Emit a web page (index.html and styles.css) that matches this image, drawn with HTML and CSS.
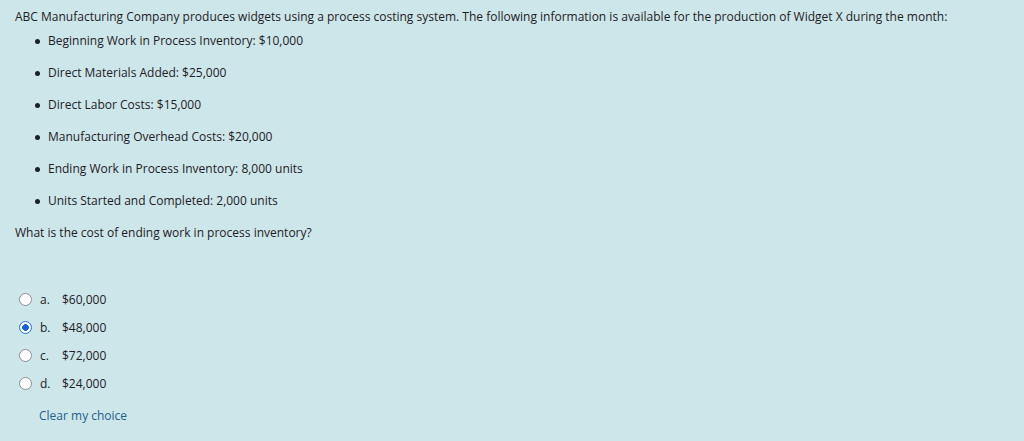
FILE: index.html
```html
<!DOCTYPE html>
<html>
<head>
<meta charset="utf-8">
<link rel="stylesheet" href="styles.css">
</head>
<body>
<div class="q">
  <p class="intro">ABC Manufacturing Company produces widgets using a process costing system. The following information is available for the production of Widget X during the month:</p>
  <ul class="facts">
    <li>Beginning Work in Process Inventory: $10,000</li>
    <li>Direct Materials Added: $25,000</li>
    <li>Direct Labor Costs: $15,000</li>
    <li>Manufacturing Overhead Costs: $20,000</li>
    <li>Ending Work in Process Inventory: 8,000 units</li>
    <li>Units Started and Completed: 2,000 units</li>
  </ul>
  <p class="ask">What is the cost of ending work in process inventory?</p>
  <div class="answers">
    <label class="opt"><span class="radio"></span><span class="let">a.</span><span>$60,000</span></label>
    <label class="opt"><span class="radio on"></span><span class="let">b.</span><span>$48,000</span></label>
    <label class="opt"><span class="radio"></span><span class="let">c.</span><span>$72,000</span></label>
    <label class="opt"><span class="radio"></span><span class="let">d.</span><span>$24,000</span></label>
  </div>
  <a class="clear">Clear my choice</a>
</div>
</body>
</html>
```
FILE: styles.css
```css
html, body { margin: 0; padding: 0; }
body {
  background: #cde6ea;
  font-family: "Open Sans", "Noto Sans", sans-serif;
  font-size: 12px;
  color: #1d2125;
  width: 1024px;
  height: 441px;
  overflow: hidden;
}
.q { padding: 8px 0 0 15px; }
.intro { margin: 0; line-height: 18px; }
.facts { margin: 6px 0 0 0; padding: 0 0 0 33px; list-style: none; }
.facts li { position: relative; line-height: 18px; margin-bottom: 14px; }
.facts li::before {
  content: ""; position: absolute; left: -13px; top: 7px;
  width: 5px; height: 5px; border-radius: 50%; background: #1d2125;
}
.ask { margin: 0; line-height: 18px; }
.answers { margin-top: 48px; display: flex; flex-direction: column; gap: 10px; }
.opt { display: flex; align-items: center; height: 18px; }
.radio {
  width: 11px; height: 11px; border-radius: 50%; border: 1px solid #8a8f94;
  background: #fff; margin: 0 8px 0 4px; box-sizing: content-box;
}
.radio.on { border-color: #1a73e8; background: radial-gradient(circle, #0f62d6 0 3px, #fff 3.6px); }
.let { width: 22px; }
.clear { display: block; margin: 15px 0 0 24px; color: #1f5f88; line-height: 18px; }
```
